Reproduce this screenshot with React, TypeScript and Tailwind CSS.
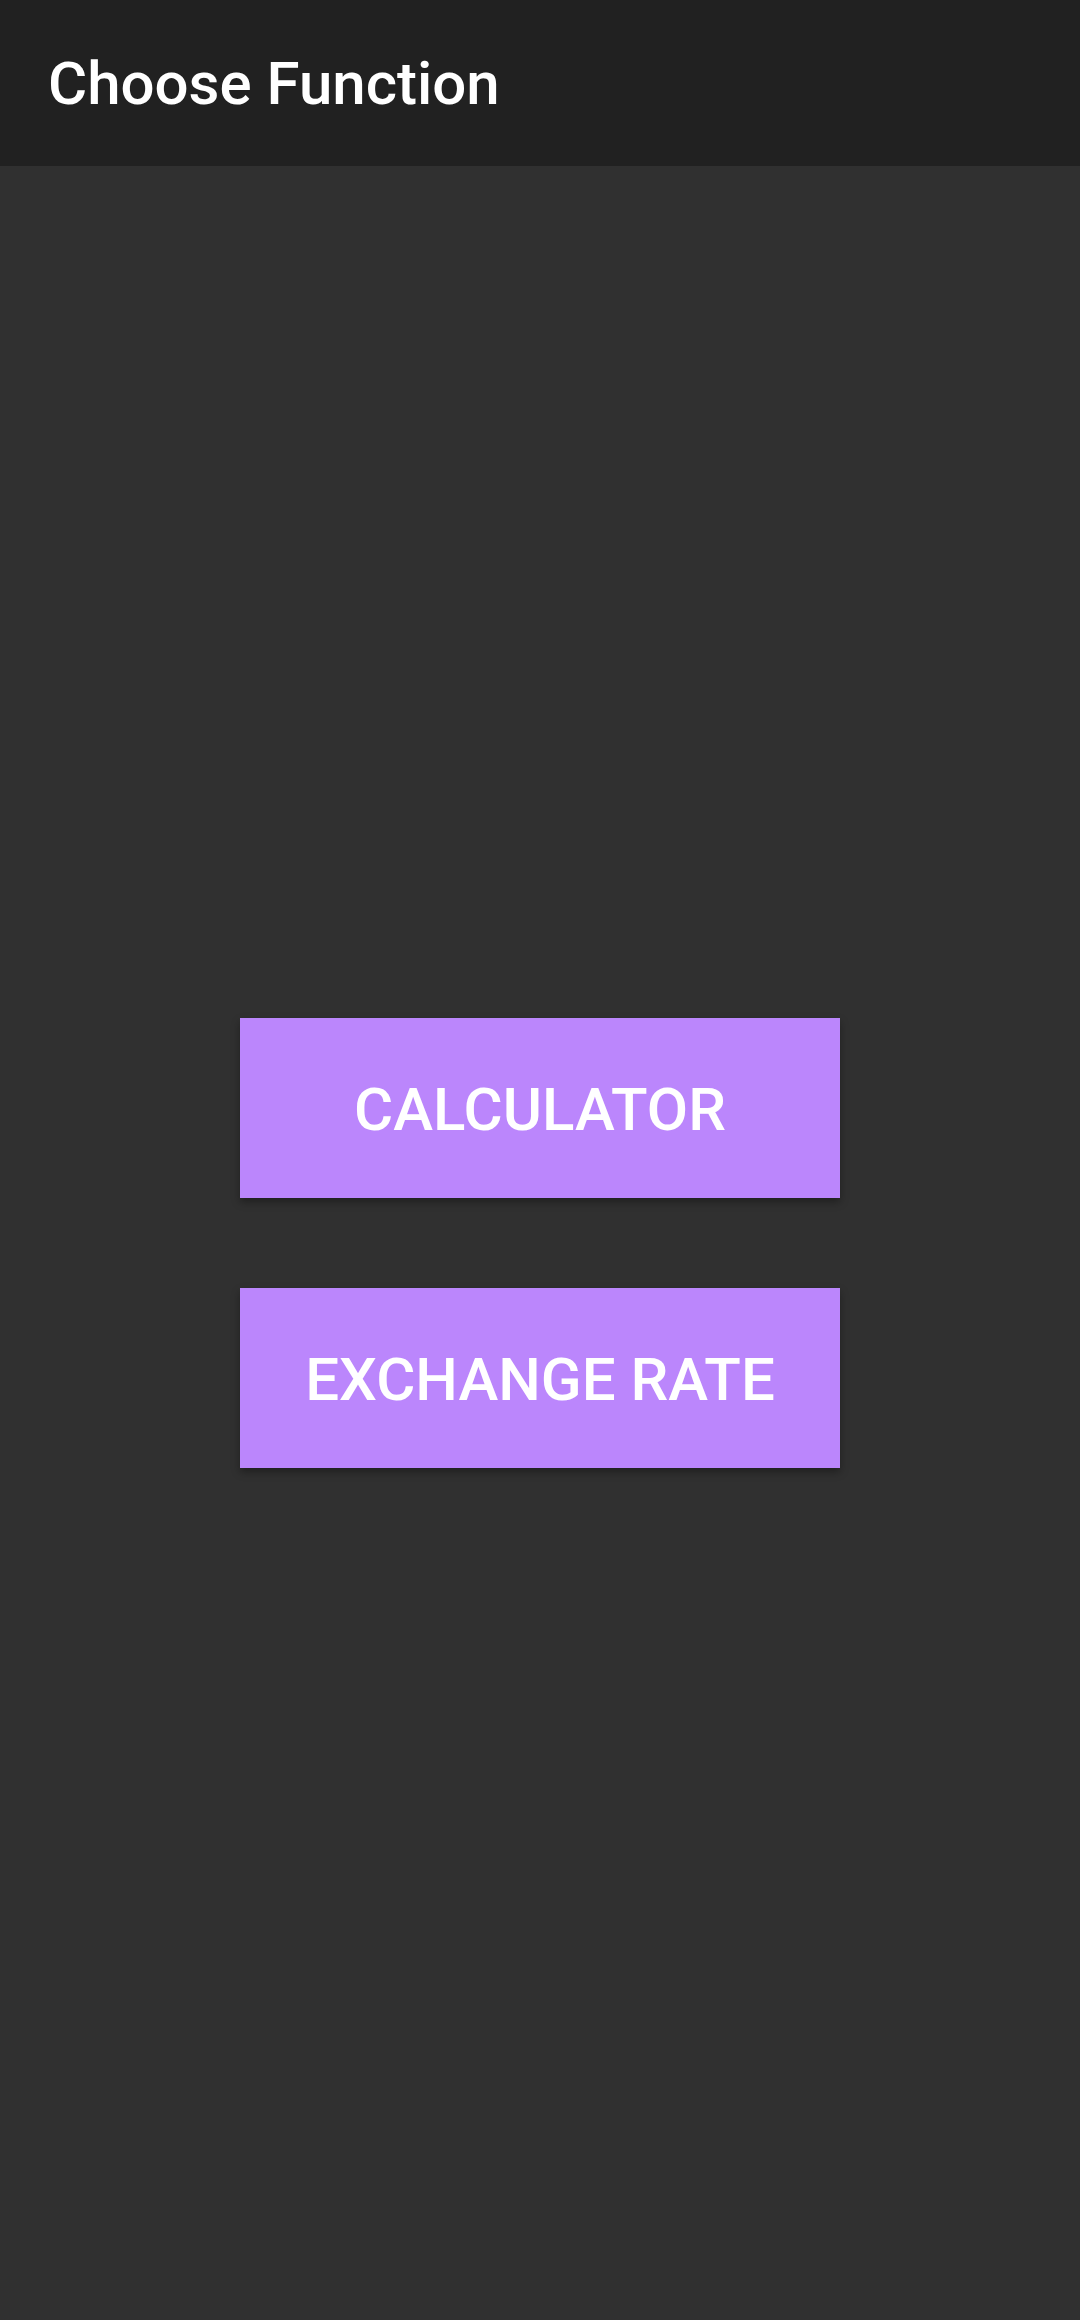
export default function App() {
  return (
    <div className="w-[1080px] h-[2320px] flex flex-col bg-[#303030]" style={{ fontFamily: 'Roboto, "Liberation Sans", sans-serif' }}>
      <div className="h-[166px] bg-[#212121] flex items-center px-[48px] pt-[2px]">
        <span className="text-white text-[60px] font-medium leading-none">Choose Function</span>
      </div>
      <div className="flex-1 flex flex-col items-center justify-center gap-[90px]">
        <button className="w-[600px] h-[180px] bg-[#bb86fc] text-white text-[60px] font-medium uppercase leading-none pt-[4px] shadow-[0_4px_8px_rgba(0,0,0,0.35)]">
          Calculator
        </button>
        <button className="w-[600px] h-[180px] bg-[#bb86fc] text-white text-[60px] font-medium uppercase leading-none pt-[4px] shadow-[0_4px_8px_rgba(0,0,0,0.35)]">
          Exchange Rate
        </button>
      </div>
    </div>
  );
}
